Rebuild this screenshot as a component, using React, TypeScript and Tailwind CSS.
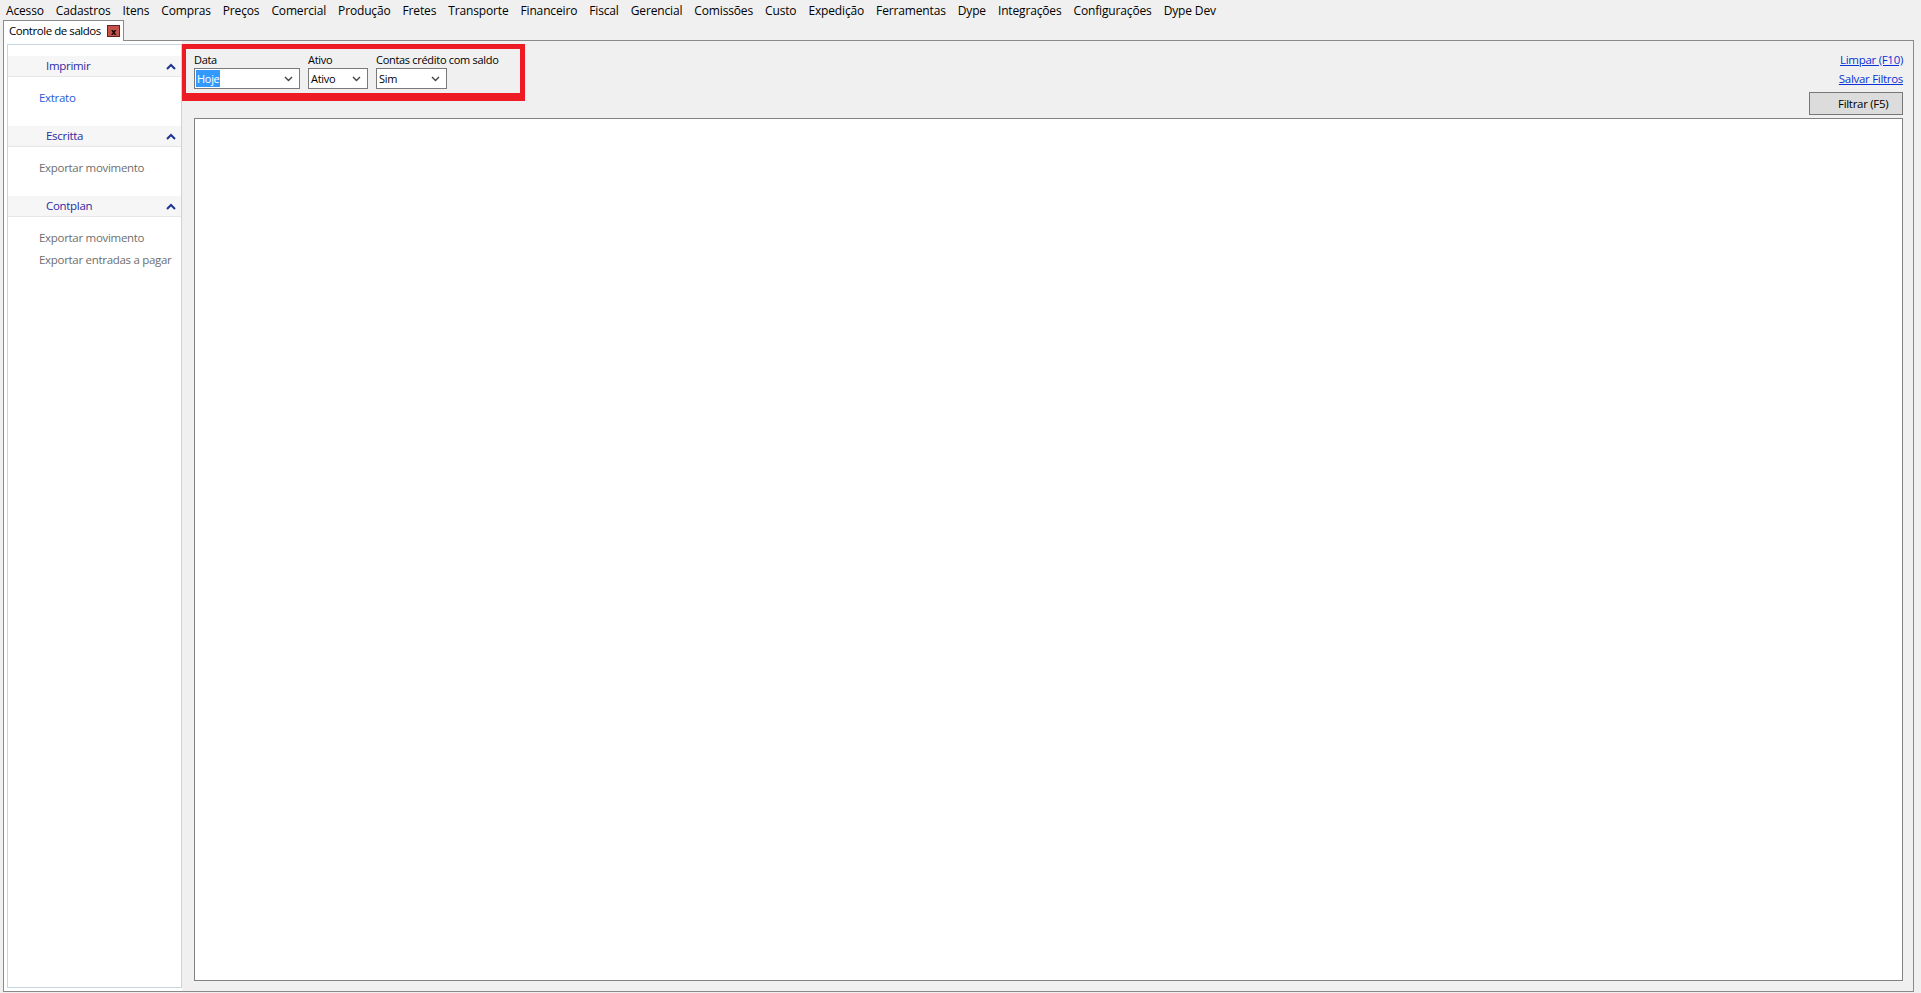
import React from 'react';

const menuItems = [
  'Acesso', 'Cadastros', 'Itens', 'Compras', 'Preços', 'Comercial', 'Produção', 'Fretes',
  'Transporte', 'Financeiro', 'Fiscal', 'Gerencial', 'Comissões', 'Custo', 'Expedição',
  'Ferramentas', 'Dype', 'Integrações', 'Configurações', 'Dype Dev',
];

type SideSection = {
  title: string;
  items: { label: string; active?: boolean }[];
};

const sections: SideSection[] = [
  { title: 'Imprimir', items: [{ label: 'Extrato', active: true }] },
  { title: 'Escritta', items: [{ label: 'Exportar movimento' }] },
  {
    title: 'Contplan',
    items: [{ label: 'Exportar movimento' }, { label: 'Exportar entradas a pagar' }],
  },
];

function ChevronUp() {
  return (
    <svg width="10" height="7" viewBox="0 0 10 7" className="text-[#1c3590]">
      <path d="M1 6 L5 2 L9 6" fill="none" stroke="currentColor" strokeWidth="2" />
    </svg>
  );
}

function ChevronDown() {
  return (
    <svg width="9" height="6" viewBox="0 0 9 6" className="text-[#444]">
      <path d="M1 1 L4.5 4.5 L8 1" fill="none" stroke="currentColor" strokeWidth="1.4" />
    </svg>
  );
}

// Combo box drawn the way the desktop client shows it
function Combo({ value, width, selected }: { value: string; width: string; selected?: boolean }) {
  return (
    <div
      className={`${width} h-[21px] border border-[#7a7a7a] bg-white flex items-center justify-between pl-[1px] pr-[6px]`}
    >
      <span
        className={
          selected ? 'bg-[#3399ff] text-white px-[1px] leading-[17px]' : 'text-black px-[1px] leading-[17px]'
        }
      >
        {value}
      </span>
      <ChevronDown />
    </div>
  );
}

function FilterField({ label, children }: { label: string; children: React.ReactNode }) {
  return (
    <div className="flex flex-col">
      <span className="h-[17px] leading-[17px] text-black whitespace-nowrap">{label}</span>
      {children}
    </div>
  );
}

export default function App() {
  return (
    <div
      className="h-screen w-full bg-[#f0f0f0] flex flex-col text-[12px] overflow-hidden"
      style={{ fontFamily: '"Segoe UI", "Open Sans", "Noto Sans", sans-serif' }}
    >
      {/* menu bar */}
      <div className="h-[21px] flex items-center tracking-[-0.15px]">
        {menuItems.map((item) => (
          <span key={item} className="px-[6px] leading-[18px] text-black whitespace-nowrap">
            {item}
          </span>
        ))}
      </div>

      {/* tab strip */}
      <div className="h-[20px] flex items-end pl-[3px]">
        <div className="h-[21px] bg-white border border-b-0 border-[#8a8a8a] flex items-center pl-[5px] pr-[3px] gap-[6px] tracking-[-0.45px] relative z-10 whitespace-nowrap">
          <span className="text-black leading-[18px] text-[11.5px]">Controle de saldos</span>
          <span className="w-[13px] h-[12px] bg-[#c4524a] border border-[#5b2622] flex items-center justify-center text-[9px] font-bold leading-none text-black">
            x
          </span>
        </div>
      </div>

      {/* tab page */}
      <div className="flex-1 flex ml-[3px] mr-[7px] mb-[1px] border border-[#8a8a8a] -mt-[1px] min-h-0">
        {/* side menu */}
        <div className="w-[178px] bg-white pl-[3px] pt-[3px] pb-[3px] flex">
          <div className="flex-1 border border-[#c5d6e0] pt-[11px] text-[11.5px] tracking-[-0.3px]">
            {sections.map((s) => (
              <div key={s.title}>
                <div className="h-[21px] bg-[#f6f6f6] border-b border-[#e6e6e6] flex items-center justify-between pl-[38px] pr-[5px]">
                  <span className="text-[#2b2ba3]">{s.title}</span>
                  <ChevronUp />
                </div>
                <div className="pt-[10px] pb-[17px] pl-[31px]">
                  {s.items.map((it, i) => (
                    <div
                      key={i}
                      className={`h-[22px] leading-[22px] whitespace-nowrap ${it.active ? 'text-[#2a5bd6]' : 'text-[#6e6e6e]'}`}
                    >
                      {it.label}
                    </div>
                  ))}
                </div>
              </div>
            ))}
          </div>
        </div>

        {/* filters and grid */}
        <div className="flex-1 flex flex-col pr-[10px] pb-[10px] min-w-0">
          <div className="flex justify-between items-start">
            <div className="mt-[3px] border-[#ed1c24] border-t-[5px] border-l-[4px] border-r-[5px] border-b-[8px] pl-[8px] pr-[22px] pt-[2px] pb-[4px] flex gap-[8px] text-[11px] tracking-[-0.3px]">
              <FilterField label="Data">
                <Combo value="Hoje" width="w-[106px]" selected />
              </FilterField>
              <FilterField label="Ativo">
                <Combo value="Ativo" width="w-[60px]" />
              </FilterField>
              <FilterField label="Contas crédito com saldo">
                <Combo value="Sim" width="w-[71px]" />
              </FilterField>
            </div>

            <div className="flex flex-col items-end pt-[10px] text-[11.5px] tracking-[-0.3px]">
              <a className="text-[#0b32d6] underline leading-[18px]">Limpar (F10)</a>
              <a className="text-[#0b32d6] underline leading-[18px] mt-[1px]">Salvar Filtros</a>
              <button className="mt-[4px] w-[94px] h-[23px] bg-[#dcdcdc] border border-[#777] text-black pl-[28px] text-left">
                Filtrar (F5)
              </button>
            </div>
          </div>

          <div className="flex-1 ml-[12px] mt-[3px] bg-white border border-[#828282]" />
        </div>
      </div>
    </div>
  );
}
